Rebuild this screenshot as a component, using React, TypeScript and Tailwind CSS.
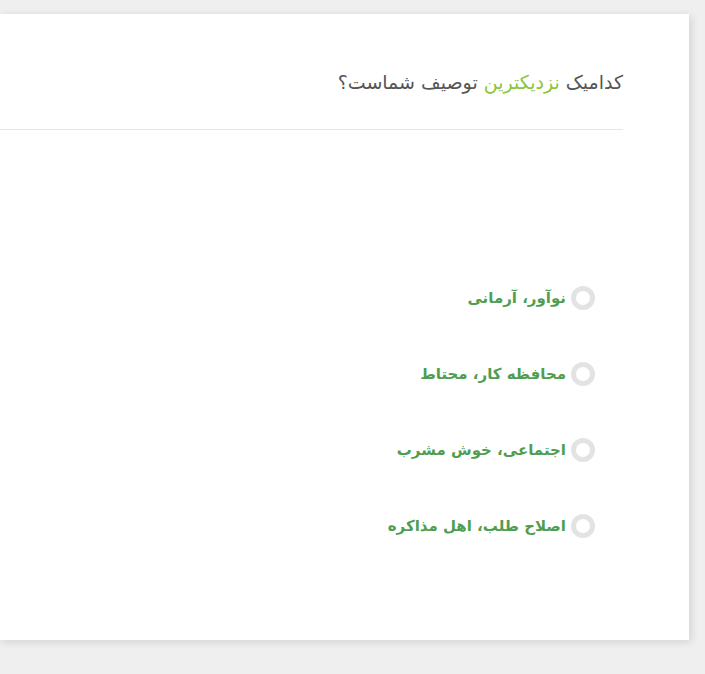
const options = [
  "نوآور، آرمانی",
  "محافظه کار، محتاط",
  "اجتماعی، خوش مشرب",
  "اصلاح طلب، اهل مذاکره",
];

export default function App() {
  return (
    <div
      className="min-h-screen bg-[#efefef] pt-[14px]"
      style={{ fontFamily: '"DejaVu Sans", sans-serif' }}
    >
      <div
        dir="rtl"
        className="h-[626px] w-[689px] bg-white pr-[66px] shadow-[2px_2px_8px_rgba(0,0,0,0.12)]"
      >
        {/* question */}
        <div className="border-b border-[#e6e6e6] pt-[55px] pb-[34px]">
          <p className="text-[19px] leading-[26px] text-[#555555]">
            کدامیک <span className="text-[#8cc43c]">نزدیکترین</span> توصیف شماست؟
          </p>
        </div>

        {/* answers */}
        <div className="mt-[156px] flex flex-col gap-[52px] pr-[28px]">
          {options.map((o) => (
            <label key={o} className="flex h-[24px] items-center gap-[5px]">
              <span className="h-[24px] w-[24px] shrink-0 rounded-full border-[5px] border-[#e3e3e3] bg-white" />
              <span className="text-[15px] font-bold text-[#4f9e4f]">{o}</span>
            </label>
          ))}
        </div>
      </div>
    </div>
  );
}
